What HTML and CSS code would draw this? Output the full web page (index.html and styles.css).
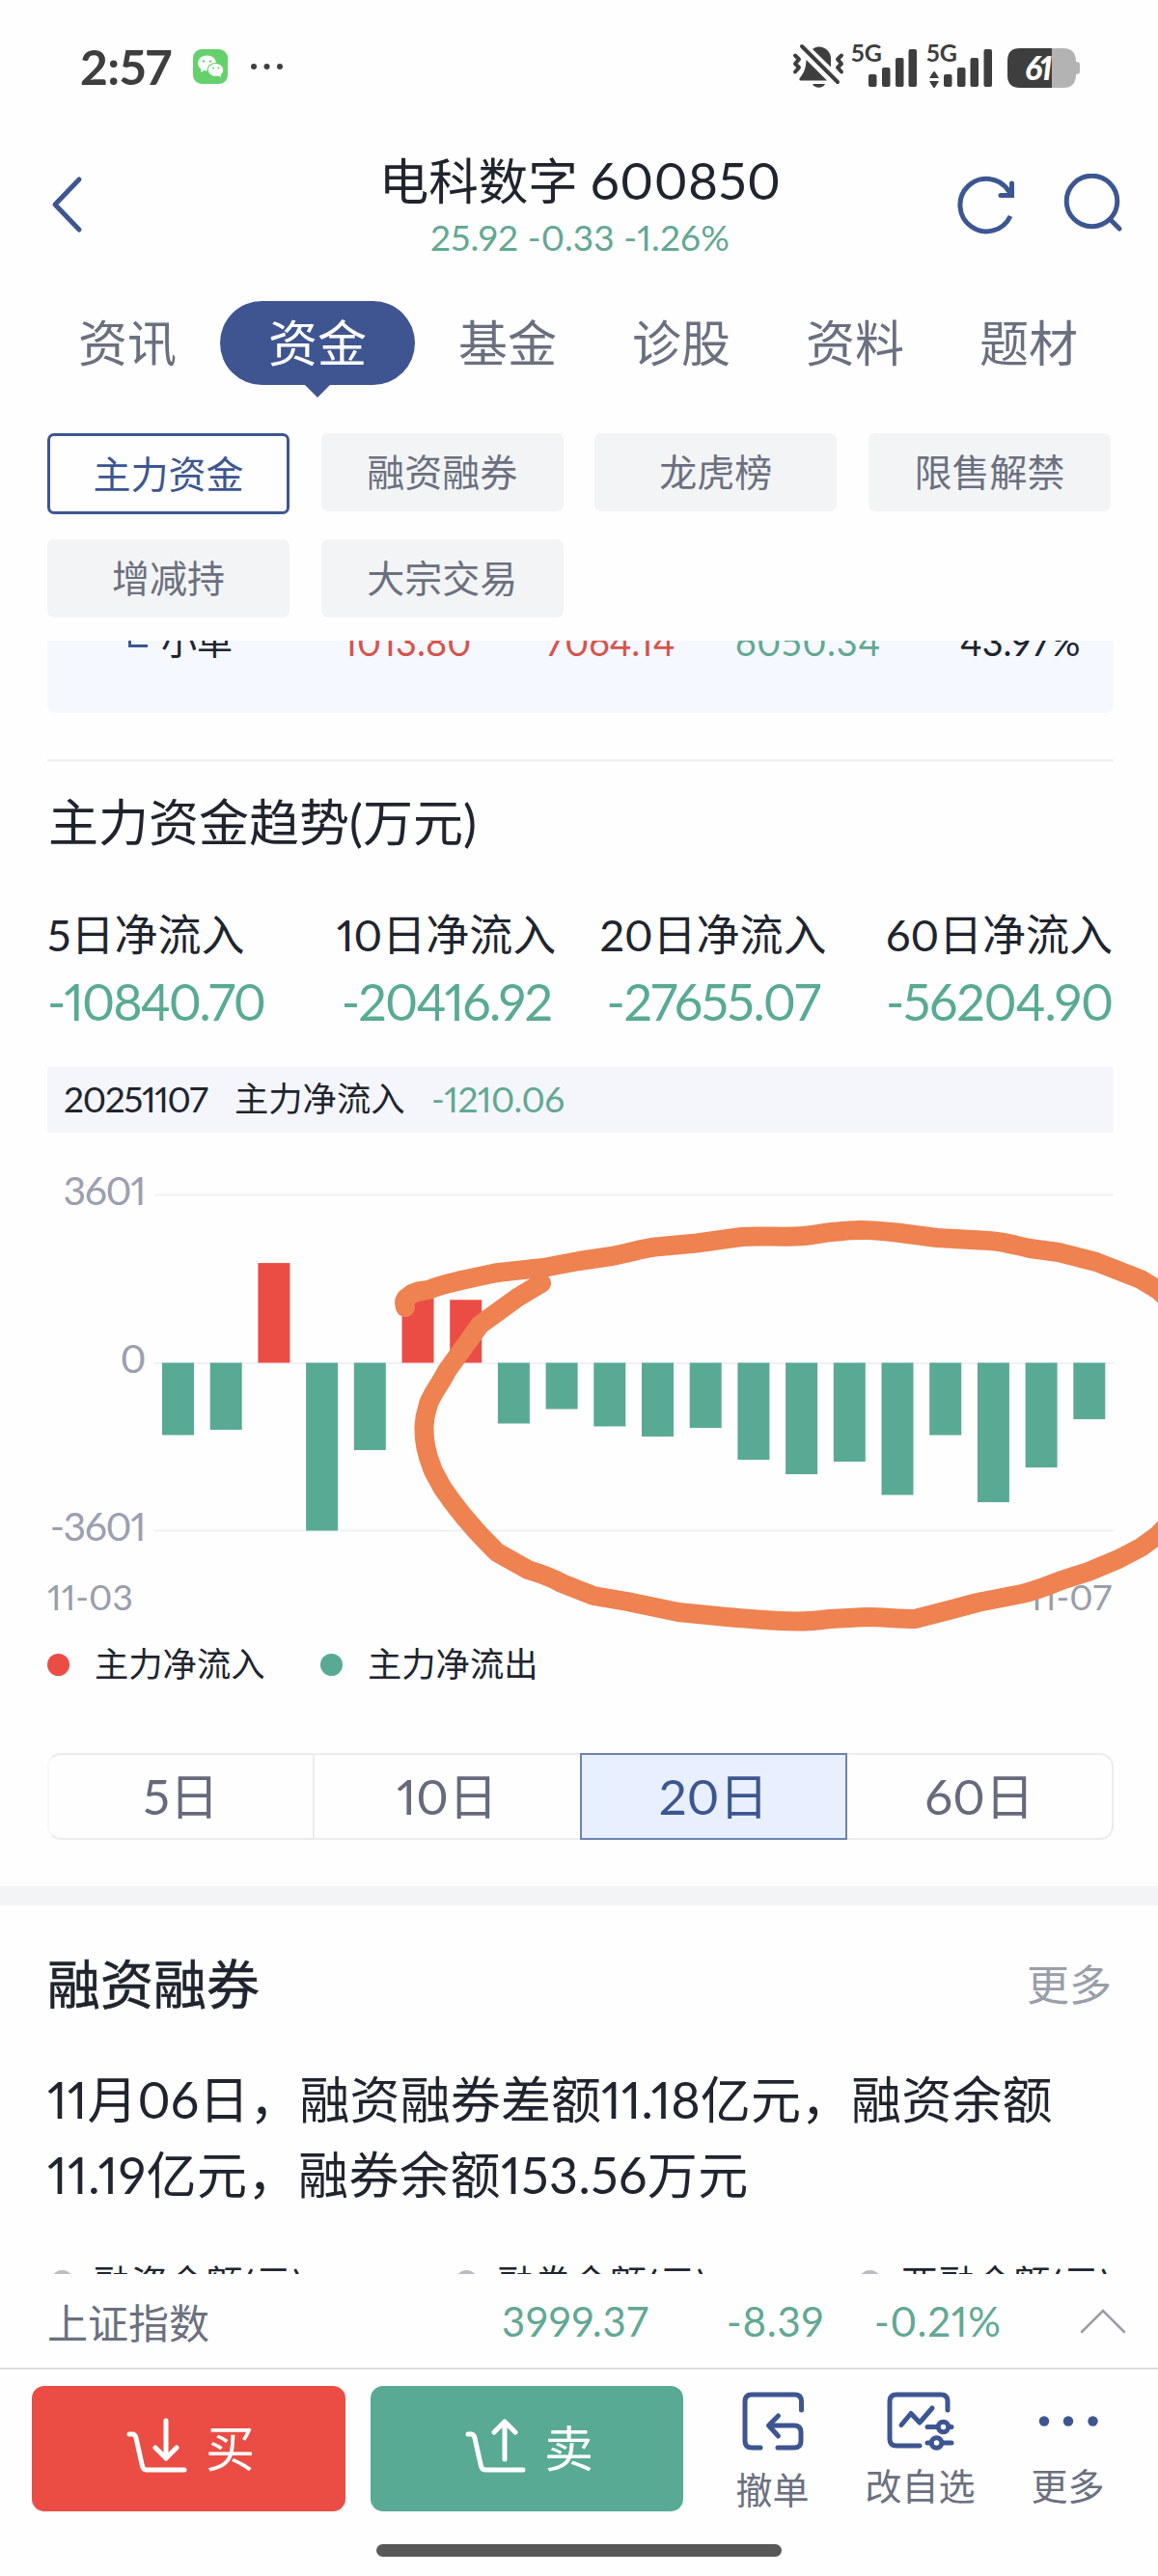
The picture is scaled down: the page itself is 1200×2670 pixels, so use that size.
FILE: index.html
```html
<!DOCTYPE html>
<html lang="zh-CN">
<head>
  <meta charset="UTF-8">
  <meta name="viewport" content="width=device-width, initial-scale=1.0">
  <title>电科数字 600850</title>
  <link rel="stylesheet" href="styles.css">
</head>
<body>
  <div class="status-bar">
    <span class="clock">2:57</span>
    <svg class="wechat" width="36" height="36" viewBox="0 0 36 36">
      <rect width="36" height="36" rx="9" fill="#64d16d"/>
      <ellipse cx="14.500" cy="14.500" rx="9.500" ry="8" fill="#fff"/>
      <path d="M9 20l-1 4 5-3z" fill="#fff"/>
      <ellipse cx="23.500" cy="21.500" rx="8.400" ry="7" fill="#fff" stroke="#64d16d" stroke-width="1.200"/>
      <path d="M25 27l4 2-.5-4z" fill="#fff"/>
      <circle cx="11" cy="12.500" r="1.200" fill="#64d16d"/><circle cx="18" cy="12.500" r="1.200" fill="#64d16d"/>
      <circle cx="21" cy="19.500" r="1" fill="#64d16d"/><circle cx="26.500" cy="19.500" r="1" fill="#64d16d"/>
    </svg>
    <svg class="more-dots" width="34" height="8" viewBox="0 0 34 8" fill="#3e3e3e">
      <circle cx="4" cy="4" r="3"/><circle cx="17.500" cy="4" r="3"/><circle cx="31" cy="4" r="3"/>
    </svg>
    <svg class="status-icons" width="300" height="74" viewBox="820 30 300 74" fill="#3e3e3e">
      <!-- muted bell -->
      <path d="M842 49c2-2 5-2.500 7-2.500 6 0 12 5 12 12v9z"/>
      <path d="M835.500 60l21.500 21.500h-27c-2 0-2-2-1-3 4-5 6-9 6.500-18.500zM842 85h13c-2 5-11 5-13 0z"/>
      <path d="M831 46l37 37M824 55.500l4 4-4 4.500 4 4-4 4.500M872 55.500l-4 4 4 4.500-4 4 4 4.500" fill="none" stroke="#3e3e3e" stroke-width="4" stroke-linecap="round" stroke-linejoin="round"/>
      <text class="net" x="882" y="62">5G</text>
      <rect x="900" y="75" width="8.500" height="13" rx="2"/><rect x="914" y="68" width="8.500" height="20" rx="2"/>
      <rect x="928" y="58" width="8.500" height="30" rx="2"/><rect x="941.500" y="49" width="8.500" height="39" rx="2"/>
      <text class="net" x="960" y="62">5G</text>
      <path d="M963 79l4-6.500q1-1 2 0l4 6.500zM963 82h10l-4 6.500q-1 1-2 0z"/>
      <rect x="978" y="75" width="8.500" height="13" rx="2"/><rect x="992" y="68" width="8.500" height="20" rx="2"/>
      <rect x="1005.500" y="58" width="8.500" height="30" rx="2"/><rect x="1019.500" y="49" width="8.500" height="39" rx="2"/>
      <!-- battery -->
      <path d="M1088 48h14q13 0 13 14 4 0 4 3v7q0 3-4 3 0 14-13 14h-14z" fill="#b3b3b3"/>
      <path d="M1057 48h33v41h-33q-13 0-13-13v-15q0-13 13-13z"/>
      <text class="battery" x="1062" y="81">61</text>
    </svg>
  </div>

  <header class="header">
    <svg class="back" width="40" height="64" viewBox="0 0 40 64" fill="none" stroke="#3d5691" stroke-width="5" stroke-linecap="round" stroke-linejoin="round">
      <path d="M33 6L8 32l25 26"/>
    </svg>
    <div class="stock">
      <h1>电科数字 <span class="code">600850</span></h1>
      <p>25.92 -0.33 -1.26%</p>
    </div>
    <svg class="header-icons" width="176" height="66" viewBox="990 180 176 66" fill="none" stroke="#3d5691" stroke-width="5">
      <path d="M1047 224A27.300 27.300 0 1 1 1045 197.500L1049 202"/>
      <path d="M1048.500 190v12.500H1037" stroke-linecap="round"/>
      <circle cx="1131.500" cy="208.500" r="26.300"/>
      <path d="M1151 228l9 9" stroke-linecap="round"/>
    </svg>
  </header>

  <nav class="tabs">
    <a class="tab">资讯</a>
    <a class="tab active">资金</a>
    <a class="tab">基金</a>
    <a class="tab">诊股</a>
    <a class="tab">资料</a>
    <a class="tab">题材</a>
  </nav>

  <div class="chips">
    <span class="chip active">主力资金</span>
    <span class="chip">融资融券</span>
    <span class="chip">龙虎榜</span>
    <span class="chip">限售解禁</span>
    <span class="chip">增减持</span>
    <span class="chip">大宗交易</span>
  </div>

  <div class="order-row">
    <span class="name"><i></i>小单</span>
    <span class="red">1013.80</span>
    <span class="red">7064.14</span>
    <span class="green wide">6050.34</span>
    <span class="ratio">43.97%</span>
  </div>

  <section class="trend">
    <h2>主力资金趋势(万元)</h2>
    <div class="stats">
      <div class="stat"><span class="label">5日净流入</span><span class="value one">-10840.70</span></div>
      <div class="stat"><span class="label">10日净流入</span><span class="value two">-20416.92</span></div>
      <div class="stat"><span class="label">20日净流入</span><span class="value three">-27655.07</span></div>
      <div class="stat"><span class="label">60日净流入</span><span class="value">-56204.90</span></div>
    </div>
    <div class="day-info">
      <span class="date">20251107</span><span class="type">主力净流入</span><span class="amount">-1210.06</span>
    </div>

    <div class="chart">
      <div class="axis"><span>3601</span><span>0</span><span>-3601</span></div>
      <svg class="bars" width="994" height="352" viewBox="160 1237 994 352">
        <path d="M160 1238.500h994M160 1413h994M160 1586.500h994" stroke="#f1f1f3" stroke-width="2"/>
        <g id="bars"></g>
      </svg>
      <!-- hand drawn mark -->
      <svg class="mark" width="1200" height="440" viewBox="0 1260 1200 440">
        <path d="M420 1355C418 1349 419 1346 424 1343C429 1339 434 1338 444 1337C455 1332 465 1330 478 1327L513 1319.500C530 1317 545 1316 563 1314L600 1307L634 1302C655 1298 668 1293 684 1292L722 1288.500L765 1282.500C785 1280 810 1283 833 1281C845 1280 856 1277 868 1276.500C890 1274 905 1275 929 1277.500L971 1283L1025 1286C1041 1287 1053 1291 1067 1294L1097 1298L1136 1308L1159 1317L1182 1326L1200 1337L1225 1360V1565L1200 1591L1182 1604L1159 1616L1128 1629L1109 1635C1090 1641 1080 1647 1059 1652L1013 1661L983 1669L948 1678C930 1678 915 1676 898 1676L860 1678C840 1681 815 1681 791 1679L753 1676L703 1671L650 1660L615 1654L582 1641C570 1634 560 1631 547 1627L515 1609C500 1594 490 1583 486 1578C475 1566 466 1553 459 1543C448 1523 448 1523 447 1519Q439 1500 439.500 1478C440 1464 444 1458 444 1455C450 1440 457 1434 463 1421L497.500 1373L536 1345L561 1330"/>
      </svg>
      <div class="dates"><span>11-03</span><span>11-07</span></div>
    </div>

    <div class="legend">
      <span><i class="dot in"></i>主力净流入</span>
      <span><i class="dot out"></i>主力净流出</span>
    </div>
    <div class="range">
      <span>5日</span><span class="ten">10日</span><span class="active">20日</span><span>60日</span>
    </div>
  </section>

  <section class="margin-trade">
    <div class="section-head"><h2>融资融券</h2><a>更多</a></div>
    <p><span>11月06日，融资融券差额11.18亿元，融资余额</span><br><span class="second">11.19亿元，融券余额153.56万元</span></p>
    <div class="cut-legend">
      <span><i></i>融资余额(元)</span>
      <span><i></i>融券余额(元)</span>
      <span><i></i>两融余额(元)</span>
    </div>
  </section>

  <div class="index-bar">
    <span class="index-name">上证指数</span>
    <span class="price">3999.37</span>
    <span class="change">-8.39</span>
    <span class="percent">-0.21%</span>
    <svg width="50" height="30" viewBox="0 0 50 30" fill="none" stroke="#9a9eaa" stroke-width="2.500" stroke-linecap="round">
      <path d="M3 26L25 4l22 22"/>
    </svg>
  </div>

  <footer class="footer">
    <button class="buy">
      <svg width="64" height="58" viewBox="0 0 64 58"><path d="M3 17h3q3 0 4 4l6 27q1 6 5 6h39M41 3v39M30 31l11 11 11-11"/></svg>
      买
    </button>
    <button class="sell">
      <svg width="64" height="58" viewBox="0 0 64 58"><path d="M3 17h3q3 0 4 4l6 27q1 6 5 6h39M41 43V4M30 15L41 4l11 11"/></svg>
      卖
    </button>
    <div class="action cancel">
      <svg width="70" height="66" viewBox="766 2477 70 66">
        <path d="M830.500 2498v-9q0-7-7-7h-44.500q-7 0-7 7v41q0 7 7 7h9M806 2537h17q7 0 7-7v-9q0-7-7-7h-26M806.500 2504l-10 10 10 11"/>
      </svg>
      <span>撤单</span>
    </div>
    <div class="action">
      <svg width="72" height="66" viewBox="918 2477 72 66">
        <path d="M982 2498v-9q0-7-7-7h-46q-7 0-7 7v39q0 7 7 7h24M934 2513.500l10-12 9 9.500 13-15M961 2515.500h11M983 2515.500h3M961 2532h4M977 2532h9"/>
        <circle cx="977.500" cy="2515.500" r="5.300"/><circle cx="970.500" cy="2532" r="5.300"/>
      </svg>
      <span>改自选</span>
    </div>
    <div class="action last">
      <svg class="filled" width="70" height="66" viewBox="1071 2477 70 66">
        <circle cx="1081" cy="2509.500" r="5.200"/><circle cx="1106" cy="2509.500" r="5.200"/><circle cx="1131.500" cy="2509.500" r="5.200"/>
      </svg>
      <span>更多</span>
    </div>
  </footer>
  <div class="home-bar"></div>

  <script>
    // net inflow per day, 万元
    const flows = [-1550, -1437, 2140, -3601, -1872, 1385, 1350, -1303, -993, -1365, -1582, -1396, -2080, -2390, -2120, -2835, -1551, -2990, -2245, -1210];
    const zero = 1412.5;
    const scale = 174 / 3601;

    document.getElementById('bars').innerHTML = flows.map((flow, i) => {
      const height = Math.abs(flow) * scale;
      const y = flow > 0 ? zero - height : zero;
      const color = flow > 0 ? '#eb4d44' : '#58aa94';
      return `<rect x="${168 + i * 49.7}" y="${y}" width="33" height="${height}" fill="${color}"/>`;
    }).join('');
  </script>
</body>
</html>
```

FILE: styles.css
```css
* {
  box-sizing: border-box;
}
body {
  margin: 0;
  width: 1200px;
  height: 2670px;
  overflow: hidden;
  background: #fefefe;
  color: #20242e;
  font-family: Lato, "Noto Sans CJK SC", sans-serif;
  font-variant-numeric: proportional-nums;
}
h1, h2, p {
  margin: 0;
  font-weight: 400;
}
svg {
  display: block;
  flex-shrink: 0;
}
.status-bar {
  display: flex;
  align-items: center;
  height: 138px;
  padding-left: 83px;
}
.clock {
  width: 117px;
  font-size: 50px;
  font-weight: 700;
  letter-spacing: -0.3px;
  color: #3e3e3e;
}
.more-dots {
  margin-left: 23px;
}
.status-icons {
  margin-left: 527px;
}
.net {
  font-size: 25px;
  font-weight: 700;
}
.battery {
  font-size: 34px;
  font-weight: 900;
  font-style: italic;
  letter-spacing: -3px;
  fill: #fff;
}
.header {
  display: flex;
  height: 152px;
}
.back {
  margin: 42px 0 0 49px;
}
.stock {
  flex: none;
  width: 1024px;
  text-align: center;
}
.stock h1 {
  height: 90px;
  font-size: 51.5px;
  line-height: 97px;
}
.code {
  font-size: 53px;
  letter-spacing: 0.5px;
}
.stock p {
  font-size: 37px;
  line-height: 36px;
  letter-spacing: 0.15px;
  color: #62a893;
}
.header-icons {
  margin: 42px 0 0 -123px;
}
.tabs {
  display: flex;
  padding: 22px 0 0 42px;
  height: 159px;
}
.tab {
  width: 180px;
  height: 87px;
  font-size: 51px;
  line-height: 87px;
  text-align: center;
  color: #6b7080;
}
.tab.active {
  position: relative;
  width: 202px;
  margin: 0 6px;
  border-radius: 44px;
  background: #3f5591;
  color: #fff;
}
.tab.active::after {
  content: "";
  position: absolute;
  left: 87px;
  top: 86px;
  border: 14px solid transparent;
  border-top-color: #3f5591;
  border-bottom: none;
}
.chips {
  display: grid;
  grid-template-columns: repeat(4, 251px);
  grid-template-rows: 84px 81px;
  gap: 26px 32.7px;
  height: 215px;
  padding-left: 49px;
  align-content: start;
}
.chip {
  height: 81px;
  border-radius: 7px;
  background: #f3f4f6;
  font-size: 39px;
  line-height: 80px;
  text-align: center;
  color: #6b7080;
}
.chip.active {
  height: 84px;
  border: 3px solid #3d5691;
  background: #fefefe;
  line-height: 79px;
  color: #3d5691;
}
.order-row {
  display: flex;
  height: 75px;
  margin: 0 46px 0 49px;
  padding-left: 84px;
  border-radius: 0 0 8px 8px;
  background: #f5f8ff;
  overflow: hidden;
  font-size: 38px;
  line-height: 40px;
}
.order-row span {
  flex: none;
  margin-top: -19px;
  width: 210px;
}
.order-row .name {
  display: flex;
  width: 222px;
  font-size: 37px;
}
.order-row i {
  width: 20px;
  height: 20px;
  margin: 6px 14px 0 0;
  border-left: 3px solid #3d5691;
  border-bottom: 3px solid #3d5691;
}
.order-row .wide {
  width: 233px;
  margin-left: -13px;
  letter-spacing: 0.8px;
}
.red {
  color: #d6544e;
}
.green {
  color: #62a893;
}
.trend {
  margin: 48px 46px 0 49px;
  border-top: 2px solid #efeff1;
}
.trend h2 {
  height: 130px;
  padding-left: 1px;
  font-size: 52px;
  line-height: 127px;
}
.stats {
  display: grid;
  grid-template-columns: 274px 279px 274px 277px;
  height: 187px;
  padding-top: 18px;
}
.stat {
  display: flex;
  flex-direction: column;
  align-items: center;
}
.stat:first-child {
  align-items: flex-start;
}
.stat:last-child {
  align-items: flex-end;
}
.label {
  font-size: 45px;
  line-height: 64px;
}
.value {
  font-size: 52px;
  line-height: 74px;
  letter-spacing: -1.2px;
  color: #58aa94;
}
.value.one {
  letter-spacing: -2px;
}
.value.two {
  letter-spacing: -1.7px;
}
.value.three {
  letter-spacing: -1.4px;
}
.day-info {
  display: flex;
  height: 68px;
  padding-left: 17px;
  background: #f5f6fb;
  font-size: 37px;
  line-height: 66px;
}
.date {
  width: 177px;
  letter-spacing: -1.3px;
}
.type {
  width: 204px;
  font-size: 35.3px;
}
.amount {
  letter-spacing: -0.5px;
  color: #62a893;
}
.chart {
  position: relative;
  height: 513px;
  padding-top: 63px;
}
.axis {
  position: absolute;
  left: 0;
  top: 35px;
  width: 101px;
  text-align: right;
  font-size: 41px;
  letter-spacing: -1.4px;
  color: #9c9fb0;
}
.axis span {
  display: block;
  height: 174px;
  line-height: 50px;
}
.bars {
  margin-left: 111px;
}
.mark {
  position: absolute;
  left: -49px;
  top: 86px;
  fill: none;
  stroke: #ee8250;
  stroke-width: 20px;
  stroke-linecap: round;
  stroke-linejoin: round;
}
.dates {
  display: flex;
  justify-content: space-between;
  margin-top: 41px;
  padding-right: 2px;
  font-size: 37px;
  line-height: 50px;
  color: #9a9ea9;
}
.legend {
  display: flex;
  height: 80px;
  margin-top: -2px;
  font-size: 35.3px;
  line-height: 80px;
}
.legend span {
  display: flex;
  align-items: center;
  width: 283px;
}
.dot {
  width: 23px;
  height: 23px;
  margin-right: 26px;
  border-radius: 50%;
}
.dot.in {
  background: #eb4d44;
}
.dot.out {
  background: #58aa94;
}
.range {
  display: grid;
  grid-template-columns: 273px 277px 277px 1fr;
  height: 90px;
  margin-top: 52px;
  border: 2px solid #ececee;
  border-left-color: #f8f8f9;
  border-radius: 14px;
}
.range span {
  font-size: 51px;
  line-height: 86px;
  text-align: center;
  color: #666a7c;
}
.range .ten {
  border-left: 2px solid #ececee;
}
.range .active {
  margin: -2px 0;
  border: 2px solid #6c83ae;
  background: #e8f0ff;
  color: #3d5691;
}
.margin-trade {
  height: 402px;
  margin-top: 48px;
  padding: 0 46px 0 49px;
  border-top: 20px solid #f3f4f6;
  overflow: hidden;
}
.section-head {
  display: flex;
  justify-content: space-between;
  height: 162px;
  line-height: 162px;
}
.section-head h2 {
  font-size: 55px;
  -webkit-text-stroke: 0.6px #20242e;
}
.section-head a {
  padding-right: 2px;
  font-size: 44px;
  line-height: 164px;
  color: #9a9ea9;
}
.margin-trade p {
  height: 209px;
  font-size: 52px;
  line-height: 78px;
  letter-spacing: 0.1px;
  white-space: nowrap;
}
.second {
  letter-spacing: 0.5px;
}
.cut-legend {
  display: flex;
  font-size: 37.5px;
  line-height: 40px;
}
.cut-legend span {
  display: flex;
  flex: none;
  width: 418.5px;
  letter-spacing: 1.5px;
}
.cut-legend i {
  width: 23px;
  height: 23px;
  margin: 7px 21px 0 4px;
  border-radius: 50%;
  background: #b9bcc4;
}
.index-bar {
  display: flex;
  align-items: center;
  height: 99px;
  padding-left: 49px;
  border-bottom: 2px solid #dddddf;
  font-size: 42px;
  letter-spacing: 0.8px;
  color: #62a893;
}
.index-name {
  width: 471px;
  letter-spacing: 0;
  color: #6b7080;
}
.price {
  width: 233px;
}
.change {
  width: 153px;
}
.percent {
  width: 212px;
}
.footer {
  display: flex;
  height: 181px;
  padding: 17px 0 0 33px;
}
.footer button {
  display: flex;
  align-items: center;
  width: 325px;
  height: 130px;
  margin-right: 26px;
  padding: 0 0 6px 98px;
  border: none;
  border-radius: 13px;
  color: #fff;
  font: 400 51px Lato, "Noto Sans CJK SC", sans-serif;
}
.footer button svg {
  margin-right: 18px;
  fill: none;
  stroke: #fff;
  stroke-width: 5px;
  stroke-linecap: round;
  stroke-linejoin: round;
}
.footer .buy {
  background: #eb4d44;
}
.footer .sell {
  width: 324px;
  margin-right: 16px;
  background: #58aa94;
}
.action {
  display: flex;
  flex-direction: column;
  align-items: center;
  width: 153px;
  padding-top: 4px;
  font-size: 38px;
  line-height: 66px;
  color: #6b7080;
}
.action svg {
  fill: none;
  stroke: #3d5691;
  stroke-width: 5px;
  stroke-linecap: round;
  stroke-linejoin: round;
}
.cancel span {
  padding-top: 4px;
}
.action .filled {
  fill: #3d5691;
  stroke: none;
}
.home-bar {
  width: 420px;
  height: 13px;
  margin: 0 auto;
  border-radius: 7px;
  background: #585858;
}
```
